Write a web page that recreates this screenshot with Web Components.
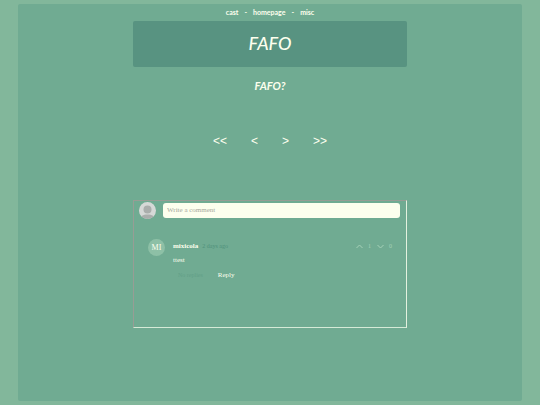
<!DOCTYPE html>
<html lang="en">
<head>
<meta charset="utf-8">
<meta name="viewport" content="width=device-width, initial-scale=1">
<title>FAFO</title>
<style>
  html {
    height: 100%;
  }

  body {
    --cream: #fdffee;
    --panel: #70ab92;
    --banner: #589381;
    --hand: "Lato", "Open Sans", sans-serif;
    --serif: "Liberation Serif", serif;
    box-sizing: border-box;
    min-height: 100%;
    margin: 0;
    padding: 4px 18px;
    display: flex;
    background: #82b79b;
    color: var(--cream);
    font-family: var(--hand);
  }
</style>
</head>
<body>
<comic-page>
  <site-nav slot="nav"></site-nav>
  <comic-banner slot="banner">FAFO</comic-banner>
  <span slot="title">FAFO?</span>
  <page-turner></page-turner>
  <comment-box>
    <comment-entry author="mixicola" initials="MI" date="2 days ago" up="1" down="0">ttest</comment-entry>
  </comment-box>
</comic-page>

<script>
/**
 * Page panel holding the centred column.
 */
class ComicPage extends HTMLElement {
  constructor() {
    super();
    this.attachShadow({ mode: "open" });
  }

  connectedCallback() {
    this.shadowRoot.innerHTML = `
      <style>
        :host {
          display: block;
          flex: 1;
          background: var(--panel);
          border-radius: 2px;
        }

        main {
          width: 54%;
          min-width: 274px;
          max-width: 720px;
          box-sizing: border-box;
          margin: 0 auto;
          padding-top: 2px;
          display: flex;
          flex-direction: column;
        }

        h2 {
          margin: 10px 0 0;
          font-size: 11px;
          font-weight: 700;
          font-style: italic;
          line-height: 18px;
          text-align: center;
        }
      </style>

      <main>
        <slot name="nav"></slot>
        <slot name="banner"></slot>
        <h2><slot name="title"></slot></h2>
        <slot></slot>
      </main>
    `;
  }
}

/**
 * Row of links at the top of the page.
 */
class SiteNav extends HTMLElement {
  constructor() {
    super();
    this.attachShadow({ mode: "open" });
  }

  connectedCallback() {
    this.shadowRoot.innerHTML = `
      <style>
        :host {
          display: block;
        }

        nav {
          display: flex;
          justify-content: center;
          gap: 6px;
          font-size: 7px;
          font-weight: 700;
          line-height: 12px;
          padding-bottom: 3px;
        }

        a {
          color: inherit;
          text-decoration: none;
        }
      </style>

      <nav>
        <a href="#cast">cast</a>
        <span>-</span>
        <a href="#home">homepage</a>
        <span>-</span>
        <a href="#misc">misc</a>
      </nav>
    `;
  }
}

/**
 * Banner with the name of the comic.
 */
class ComicBanner extends HTMLElement {
  constructor() {
    super();
    this.attachShadow({ mode: "open" });
  }

  connectedCallback() {
    this.shadowRoot.innerHTML = `
      <style>
        :host {
          display: block;
          padding: 10px 0 12px;
          background: var(--banner);
          border-radius: 2px;
          text-align: center;
        }

        h1 {
          margin: 0;
          font-size: 18px;
          font-weight: 500;
          font-style: italic;
          line-height: 24px;
        }
      </style>

      <h1><slot></slot></h1>
    `;
  }
}

/**
 * First, previous, next and last page links.
 */
class PageTurner extends HTMLElement {
  constructor() {
    super();
    this.attachShadow({ mode: "open" });
  }

  connectedCallback() {
    this.shadowRoot.innerHTML = `
      <style>
        :host {
          display: block;
          margin: 36px 0 49px;
        }

        nav {
          display: flex;
          justify-content: center;
          gap: 24px;
          font-family: "Liberation Sans", sans-serif;
          font-size: 12px;
          line-height: 20px;
        }

        a {
          color: inherit;
          text-decoration: none;
        }
      </style>

      <nav>
        <a href="#first" aria-label="First page">&lt;&lt;</a>
        <a href="#prev" aria-label="Previous page">&lt;</a>
        <a href="#next" aria-label="Next page">&gt;</a>
        <a href="#last" aria-label="Last page">&gt;&gt;</a>
      </nav>
    `;
  }
}

/**
 * Framed comment section with its input.
 */
class CommentBox extends HTMLElement {
  constructor() {
    super();
    this.attachShadow({ mode: "open" });
  }

  connectedCallback() {
    this.shadowRoot.innerHTML = `
      <style>
        :host {
          display: block;
          padding: 1px 6px 45px 5px;
          border: 1px solid;
          border-color: #979d95 #e4f1df #d5ead7 #979d95;
          font-family: var(--serif);
        }

        form {
          display: flex;
          align-items: center;
          gap: 7px;
          margin-bottom: 20px;
        }

        svg {
          display: block;
          flex: none;
        }

        input {
          flex: 1;
          min-width: 0;
          height: 15px;
          box-sizing: border-box;
          padding: 0 4px;
          border: 0;
          border-radius: 3px;
          background: var(--cream);
          font: 7px/15px var(--serif);
          color: #555;
        }

        input::placeholder {
          color: #a5a89c;
          opacity: 1;
        }
      </style>

      <form>
        <svg width="17" height="17" viewBox="0 0 34 34" aria-hidden="true">
          <clipPath id="round"><circle cx="17" cy="17" r="17"/></clipPath>
          <g clip-path="url(#round)">
            <rect width="34" height="34" fill="#d6d9d7"/>
            <circle cx="17" cy="15" r="8" fill="#aaaeac"/>
            <path d="M2 34c0-6 6-9 15-9s15 3 15 9z" fill="#aaaeac"/>
          </g>
        </svg>
        <input type="text" placeholder="Write a comment" aria-label="Write a comment">
      </form>
      <slot></slot>
    `;
  }
}

/**
 * One comment with its votes and reply button.
 */
class CommentEntry extends HTMLElement {
  constructor() {
    super();
    this.attachShadow({ mode: "open" });
  }

  connectedCallback() {
    const author = this.getAttribute("author");
    const initials = this.getAttribute("initials");
    const date = this.getAttribute("date");
    const up = this.getAttribute("up");
    const down = this.getAttribute("down");

    this.shadowRoot.innerHTML = `
      <style>
        :host {
          display: flex;
          gap: 8px;
          padding: 0 8px 0 9px;
          font-size: 7px;
          line-height: 14px;
        }

        .avatar {
          flex: none;
          width: 17px;
          height: 17px;
          border-radius: 50%;
          background: #8dc0a6;
          font-size: 8px;
          line-height: 17px;
          text-align: center;
        }

        .body {
          flex: 1;
        }

        header {
          display: flex;
          align-items: center;
          gap: 4px;
        }

        time {
          flex: 1;
          color: #4f917b;
          font-size: 6px;
        }

        .votes {
          display: flex;
          align-items: center;
          gap: 6px;
          color: #a5d1b7;
          font-size: 6px;
        }

        button {
          display: flex;
          align-items: center;
          gap: 5px;
          padding: 0;
          border: 0;
          background: none;
          color: inherit;
          font: inherit;
        }

        svg {
          display: block;
        }

        p {
          margin: 0;
        }

        footer {
          display: flex;
          gap: 15px;
          padding: 1px 0 0 5px;
        }

        .replies {
          color: #629f87;
          font-size: 6px;
        }
      </style>

      <div class="avatar">${initials}</div>
      <div class="body">
        <header>
          <b>${author}</b>
          <time>${date}</time>
          <div class="votes">
            <button type="button" aria-label="Vote up">
              <svg width="7" height="5" viewBox="0 0 7 5"><path d="M.5 4l3-3 3 3" fill="none" stroke="currentColor"/></svg>
              <span>${up}</span>
            </button>
            <button type="button" aria-label="Vote down">
              <svg width="7" height="5" viewBox="0 0 7 5"><path d="M.5 1l3 3 3-3" fill="none" stroke="currentColor"/></svg>
              <span>${down}</span>
            </button>
          </div>
        </header>
        <p><slot></slot></p>
        <footer>
          <span class="replies">No replies</span>
          <button type="button">Reply</button>
        </footer>
      </div>
    `;
  }
}

customElements.define("comic-page", ComicPage);
customElements.define("site-nav", SiteNav);
customElements.define("comic-banner", ComicBanner);
customElements.define("page-turner", PageTurner);
customElements.define("comment-box", CommentBox);
customElements.define("comment-entry", CommentEntry);
</script>
</body>
</html>
